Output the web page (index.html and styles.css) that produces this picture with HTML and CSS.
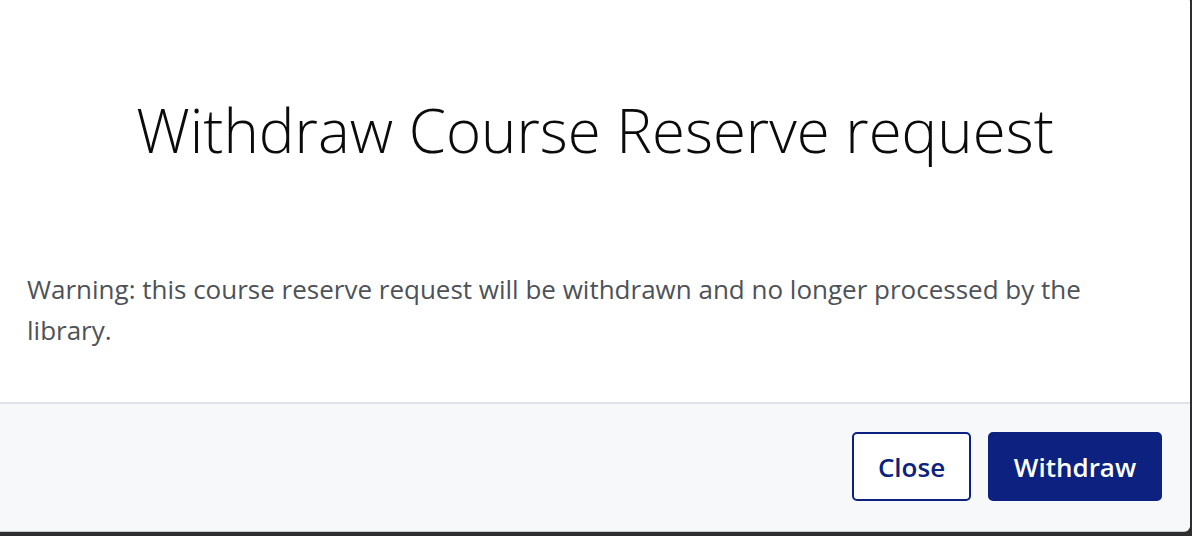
FILE: index.html
```html
<!DOCTYPE html>
<html lang="en">
<head>
<meta charset="utf-8">
<title>Withdraw Course Reserve request</title>
<link rel="stylesheet" href="styles.css">
</head>
<body>
<div class="modal" role="dialog" aria-labelledby="modal-title">
  <div class="modal-header">
    <h1 id="modal-title" class="modal-title">Withdraw Course Reserve request</h1>
  </div>
  <div class="modal-body">
    <p class="warning">Warning: this course reserve request will be withdrawn and no longer processed by the library.</p>
  </div>
  <div class="modal-footer">
    <button class="btn btn-outline" type="button">Close</button>
    <button class="btn btn-primary" type="button">Withdraw</button>
  </div>
</div>
</body>
</html>
```

FILE: styles.css
```css
html, body {
  margin: 0;
  padding: 0;
}

body {
  background: #2e2e2e;
  width: 1192px;
  height: 536px;
  overflow: hidden;
  font-family: "Open Sans", "Liberation Sans", sans-serif;
}

.modal {
  width: 1190px;
  margin-top: -4px;
  background: #ffffff;
  border-radius: 0 6px 6px 0;
  box-shadow: 0 1px 0 #c9c9c9;
  overflow: hidden;
}

.modal-header {
  padding: 98px 20px 0;
  text-align: center;
}

.modal-title {
  margin: 0;
  font-size: 60px;
  line-height: 72px;
  font-weight: 300;
  color: #0b0b0b;
}

.modal-body {
  padding: 103px 60px 51px 27px;
}

.warning {
  margin: 0;
  font-size: 26px;
  line-height: 41px;
  color: #4d5258;
}

.modal-footer {
  display: flex;
  justify-content: flex-end;
  align-items: center;
  gap: 17px;
  padding: 28px 28px 30px;
  background: #f7f8fa;
  border-top: 2px solid #dfe2e6;
}

.btn {
  height: 69px;
  box-sizing: border-box;
  border-radius: 5px;
  font-family: "Open Sans", "Liberation Sans", sans-serif;
  font-size: 26px;
  font-weight: 600;
  cursor: pointer;
}

.btn-outline {
  width: 119px;
  background: #ffffff;
  color: #0c2180;
  border: 2px solid #0c2180;
}

.btn-primary {
  width: 174px;
  background: #0c2180;
  color: #ffffff;
  border: 2px solid #0c2180;
}
```
